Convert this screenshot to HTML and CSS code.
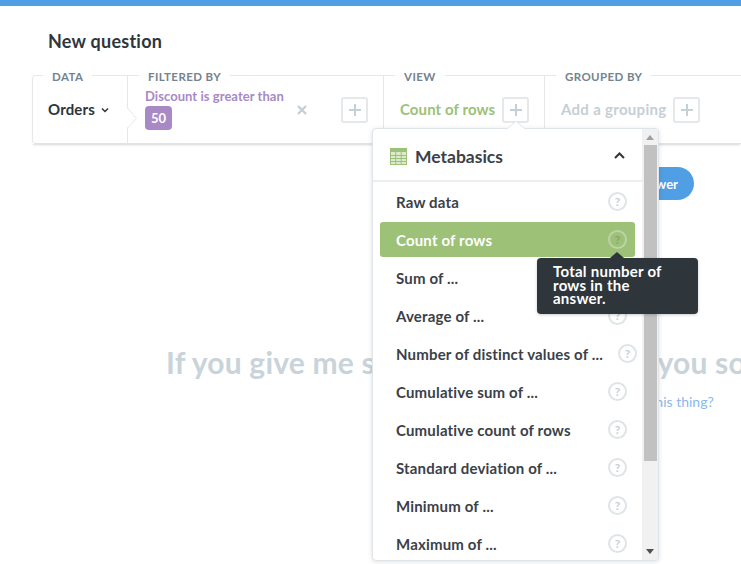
FILE: index.html
```html
<!DOCTYPE html>
<html lang="en">
<head>
<meta charset="utf-8">
<title>New question</title>
<link rel="stylesheet" href="styles.css">
</head>
<body>
<div class="topbar"></div>
<h1 class="title">New question</h1>
<div class="bar">
  <fieldset class="sec sec-data">
    <legend>Data</legend>
    <div class="content">
      <span class="orders">Orders</span>
      <svg class="chev" width="8" height="6" viewBox="0 0 8 6"><path d="M1 1.5 4 4.5 7 1.5" fill="none" stroke="#2e353b" stroke-width="1.5"/></svg>
    </div>
  </fieldset>
  <fieldset class="sec sec-filter">
    <legend>Filtered by</legend>
    <svg class="notch" width="11" height="24" viewBox="0 0 11 24"><path d="M0 0 9.5 10.500 0 20V24H-1V0Z" fill="#fff"/><path d="M.5 0 9.500 10.500 .5 20" fill="none" stroke="#e4e8eb" stroke-width="1"/></svg>
    <div class="content">
      <div class="filter">
        <div class="filter-name">Discount is greater than</div>
        <span class="badge">50</span>
      </div>
      <svg class="x" width="10" height="10" viewBox="0 0 10 10"><path d="M1 1 9 9M9 1 1 9" stroke="#c5cfd6" stroke-width="2.400"/></svg>
      <span class="plus"><svg width="12" height="12" viewBox="0 0 12 12"><path d="M6 0V12M0 6H12" stroke="#c5cfd6" stroke-width="2"/></svg></span>
    </div>
  </fieldset>
  <fieldset class="sec sec-view">
    <legend>View</legend>
    <div class="content">
      <span class="view-name">Count of rows</span>
      <span class="plus"><svg width="12" height="12" viewBox="0 0 12 12"><path d="M6 0V12M0 6H12" stroke="#c5cfd6" stroke-width="2"/></svg></span>
    </div>
  </fieldset>
  <fieldset class="sec sec-group">
    <legend>Grouped by</legend>
    <div class="content">
      <span class="group-name">Add a grouping</span>
      <span class="plus"><svg width="12" height="12" viewBox="0 0 12 12"><path d="M6 0V12M0 6H12" stroke="#c5cfd6" stroke-width="2"/></svg></span>
    </div>
  </fieldset>
</div>
<div class="actions"><button class="run">Get Answer</button></div>
<p class="hero">If you give me some data I can show you something cool. Run a Query!</p>
<p class="help-link"><a href="#">How do I use this thing?</a></p>

<div class="popover">
  <svg class="pop-arrow" width="20" height="9" viewBox="0 0 20 9"><path d="M1 9 10 1 19 9" fill="#fff" stroke="#dfe4e8" stroke-width="1"/></svg>
  <div class="pop-main">
    <div class="pop-head">
      <svg class="tbl" width="17" height="17" viewBox="0 0 17 17"><rect x=".5" y=".5" width="16" height="16" fill="#dcebce" stroke="#9cc177"/><rect x=".5" y=".5" width="16" height="3.500" fill="#9cc177"/><path d="M.5 7.500H16.500M.5 10.500H16.500M.5 13.500H16.500M5.700 4V16M11.200 4V16" stroke="#9cc177" stroke-width="1" fill="none"/></svg>
      <span class="pop-title">Metabasics</span>
      <svg class="up" width="11" height="7" viewBox="0 0 11 7"><path d="M1 6 5.500 1.500 10 6" fill="none" stroke="#2e353b" stroke-width="2"/></svg>
    </div>
    <ul class="list">
      <li class="row"><span>Raw data</span><i class="q">?</i></li>
      <li class="row selected"><span>Count of rows</span><i class="q">?</i></li>
      <li class="row"><span>Sum of ...</span><i class="q">?</i></li>
      <li class="row"><span>Average of ...</span><i class="q">?</i></li>
      <li class="row"><span>Number of distinct values of ...</span><i class="q">?</i></li>
      <li class="row"><span>Cumulative sum of ...</span><i class="q">?</i></li>
      <li class="row"><span>Cumulative count of rows</span><i class="q">?</i></li>
      <li class="row"><span>Standard deviation of ...</span><i class="q">?</i></li>
      <li class="row"><span>Minimum of ...</span><i class="q">?</i></li>
      <li class="row"><span>Maximum of ...</span><i class="q">?</i></li>
    </ul>
  </div>
  <div class="scroll">
    <span class="tri-up"></span>
    <div class="thumb"></div>
    <span class="tri-down"></span>
  </div>
</div>

<div class="tooltip">Total number of rows in the answer.</div>
</body>
</html>
```
FILE: styles.css
```css
* { box-sizing: border-box; }
html, body { margin: 0; height: 564px; overflow: hidden; }
body { position: relative; background: #fff; font-family: Lato, "Open Sans", sans-serif; color: #2e353b; font-weight: 700; }

.topbar { height: 6px; background: #509ee3; }
.title { margin: 0; padding: 25px 0 17px 48px; font-size: 18px; line-height: 20px; letter-spacing: .25px; font-weight: 700; color: #2e353b; }

.bar { display: flex; margin-left: 32px; box-shadow: 0 2px 2px -1px rgba(0,0,0,.16); }
.sec { position: relative; margin: 0; padding: 0 0 6px; min-width: 0; border: 0; border-top: 1px solid #e4e8eb; border-left: 1px solid #e4e8eb; border-bottom: 1px solid #dfe4e8; flex: none; }
.sec legend { margin-left: 11px; padding: 2px 9px 0; font-size: 11.500px; line-height: 13px; font-weight: 700; text-transform: uppercase; letter-spacing: .4px; color: #74838f; }
.sec-data { width: 95px; border-top-left-radius: 4px; border-bottom-left-radius: 4px; }
.sec-data legend { margin-left: 10px; }
.sec-filter { width: 256px; }
.sec-view { width: 161px; }
.sec-group { width: 197px; }
.content { display: flex; align-items: center; height: 54px; font-size: 15px; letter-spacing: .15px; }
.content > span:first-child { margin-top: -2px; }

.sec-data .content { padding-left: 15px; }
.chev { margin-left: 6px; margin-top: 0; }
.notch { position: absolute; left: -1px; top: 25px; }

.sec-filter .content { padding-left: 17px; }
.filter { width: 152px; display: flex; flex-direction: column; align-items: flex-start; }
.filter-name { font-size: 13px; line-height: 14px; letter-spacing: .05px; color: #a989c5; white-space: nowrap; margin-top: -2px; margin-bottom: 3px; }
.badge { height: 24px; padding: 0 6px; background: #a989c5; color: #fff; border-radius: 4px; font-size: 13px; line-height: 24px; letter-spacing: 0; }
.x { margin-left: 0; }
.plus { display: flex; align-items: center; justify-content: center; width: 27px; height: 26px; border: 2px solid #e4e8eb; border-radius: 3px; flex: none; }
.x + .plus { margin-left: 34px; }

.sec-view .content { padding-left: 16px; gap: 7px; }
.view-name { color: #9cc177; white-space: nowrap; letter-spacing: .1px; }
.sec-group .content { padding-left: 16px; gap: 7px; }
.group-name { color: #c5cfd6; white-space: nowrap; letter-spacing: .3px; }

.actions { display: flex; justify-content: flex-end; padding: 23px 47px 0 0; }
.run { width: 100px; height: 33px; border: 0; border-radius: 17px; background: #509ee3; color: #fff; font: 700 13px Lato, sans-serif; }

.hero { margin: 145px 0 0; padding-left: 166px; font-size: 30px; line-height: 34px; letter-spacing: .2px; font-weight: 700; color: #c9d3da; white-space: nowrap; }
.help-link { margin: 14px 0 0; padding-left: 566px; font-size: 14px; line-height: 17px; font-weight: 400; white-space: nowrap; }
.help-link a { color: #8ab8ee; text-decoration: none; }

.popover { position: absolute; left: 372px; top: 128px; width: 287px; height: 433px; display: flex; background: #fff; border: 1px solid #dfe4e8; border-radius: 4px; box-shadow: 0 1px 5px rgba(0,0,0,.12); }
.pop-arrow { position: absolute; left: 133px; top: -9px; }
.pop-main { flex: 1; min-width: 0; overflow: hidden; }
.pop-head { display: flex; align-items: center; height: 53px; padding: 3px 0 0 17px; border-bottom: 2px solid #eceff1; }
.pop-title { margin-left: 8px; font-size: 17.500px; color: #3a4148; }
.up { margin-left: auto; margin-right: 17px; margin-top: -2px; }

.list { list-style: none; margin: 0; padding: 2px 0 0 7px; }
.row { display: flex; align-items: center; width: 255px; height: 35px; margin-bottom: 3px; padding: 0 8px 0 16px; font-size: 15px; letter-spacing: .17px; color: #3a4148; border-radius: 3px; white-space: nowrap; }
.row span { flex: none; }
.q { flex: none; margin-left: auto; width: 19px; height: 19px; border: 2px solid #dfe4e8; border-radius: 50%; font-style: normal; font-size: 12px; line-height: 15px; letter-spacing: 0; text-align: center; color: #c5cfd6; }
.row:nth-child(5) .q { margin-left: 15px; }
.selected { background: #9cc177; color: #fff; }
.selected .q { border-color: #bcd3a5; color: #8aa273; }

.scroll { position: relative; width: 16px; flex: none; background: #f1f1f1; display: flex; flex-direction: column; align-items: center; border-radius: 0 3px 3px 0; }
.thumb { width: 13px; height: 316px; background: #c1c1c1; margin-top: 5px; }
.tri-up { margin-top: 6px; width: 0; height: 0; border: 4px solid transparent; border-top: 0; border-bottom: 5px solid #a0a0a0; }
.tri-down { margin-top: auto; margin-bottom: 6px; width: 0; height: 0; border: 4px solid transparent; border-bottom: 0; border-top: 5px solid #505050; }

.tooltip { position: absolute; left: 537px; top: 258px; width: 161px; height: 56px; padding: 7px 24px 0 16px; background: #2e353b; color: #fff; border-radius: 4px; font-size: 15px; line-height: 13.500px; letter-spacing: .25px; box-shadow: 0 1px 3px rgba(0,0,0,.2); }
.tooltip::before { content: ""; position: absolute; left: 73px; top: -6px; border: 7px solid transparent; border-top: 0; border-bottom: 6px solid #2e353b; }
```
